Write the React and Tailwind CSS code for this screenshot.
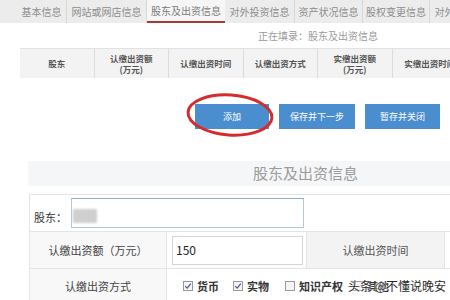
import React from "react";

const tabs = [
  { t: "基本信息", w: "w-[50px]" },
  { t: "网站或网店信息", w: "w-[80px]" },
  { t: "股东及出资信息", w: "w-[78px]", active: true },
  { t: "对外投资信息", w: "w-[70px]" },
  { t: "资产状况信息", w: "w-[68px]" },
  { t: "股权变更信息", w: "w-[67px]" },
  { t: "对外", w: "w-[30px]" },
];

const heads = [
  ["股东"],
  ["认缴出资额", "(万元)"],
  ["认缴出资时间"],
  ["认缴出资方式"],
  ["实缴出资额", "(万元)"],
  ["实缴出资时间"],
];

function Box({ checked }) {
  return (
    <span className="inline-flex items-center justify-center w-[10px] h-[10px] border border-[#9a9a9a] bg-[#f4f4f4] mr-[4px]">
      {checked && (
        <svg width="8" height="8" viewBox="0 0 8 8">
          <path d="M1.2 4.2 L3.2 6.2 L6.8 1.6" fill="none" stroke="#4a5a8a" strokeWidth="1.2" />
        </svg>
      )}
    </span>
  );
}

export default function App() {
  return (
    <div className="relative w-[450px] h-[300px] overflow-hidden bg-white font-['Noto_Sans_CJK_SC',sans-serif]">
      {/* tab bar */}
      <div className="flex h-[23px] bg-[#ececec] pl-[17px] text-[10px] text-[#8c8c8c]">
        {tabs.map((tb, i) => (
          <div
            key={i}
            className={`${tb.w} shrink-0 flex items-center justify-center whitespace-nowrap overflow-hidden ${
              tb.active ? "bg-[#f6f6f6] border-b-2 border-[#a33a3a] text-[#7a7a7a]" : "border-r border-[#d8d8d8]"
            }`}
          >
            {tb.t}
          </div>
        ))}
      </div>

      {/* status row */}
      <div className="h-[25px] flex items-center pl-[258px] text-[10px] text-[#9a9a9a]">
        正在填录：股东及出资信息
      </div>

      {/* table header */}
      <div className="ml-[20px] flex h-[30px] bg-[#f3f3f3] border-t border-[#e2e2e2] text-[8.5px] font-bold text-[#555]">
        {heads.map((h, i) => (
          <div
            key={i}
            className={`w-[74.5px] shrink-0 flex flex-col items-center justify-center leading-[11px] whitespace-nowrap overflow-hidden ${
              i < 5 ? "border-r border-[#dcdcdc]" : ""
            }`}
          >
            {h.map((l, j) => (
              <span key={j}>{l}</span>
            ))}
          </div>
        ))}
      </div>

      {/* buttons */}
      <div className="relative flex gap-[10px] pl-[195px] mt-[26px] text-[9px] text-white">
        <div className="w-[74px] h-[25px] bg-[#4a8ecf] flex items-center justify-center">添加</div>
        <div className="w-[76px] h-[25px] bg-[#4a8ecf] flex items-center justify-center">保存并下一步</div>
        <div className="w-[75px] h-[25px] bg-[#4a8ecf] flex items-center justify-center">暂存并关闭</div>
        <svg
          className="absolute left-[183px] top-[-14px]"
          width="94"
          height="50"
          viewBox="0 0 94 50"
        >
          <ellipse
            cx="47"
            cy="25"
            rx="42"
            ry="20"
            fill="none"
            stroke="#d62b2b"
            strokeWidth="3"
            transform="rotate(4 47 25)"
          />
        </svg>
      </div>

      {/* section band */}
      <div className="ml-[28px] mt-[32px] h-[25px] bg-[#f4f6f8] flex items-center pl-[225px] text-[15px] text-[#9b9b9b]">
        股东及出资信息
      </div>

      {/* form */}
      <div className="ml-[29px] mt-[8px] border-l border-t border-[#e4e4e4] text-[11px] text-[#333]">
        <div className="flex items-center h-[37px] border-b border-[#e4e4e4]">
          <span className="pl-[4px] w-[41px] mt-[8px]">股东：</span>
          <div className="relative w-[233px] h-[30px] border border-[#b4cad8] border-t-[#8fb1c6] bg-white">
            <div className="absolute left-[1px] top-[10px] w-[24px] h-[14px] bg-[#cfcfcf] blur-[1px]" />
          </div>
        </div>
        <div className="flex h-[37px] border-b border-[#e4e4e4]">
          <div className="w-[137px] bg-[#f8f8f8] border-r border-[#e4e4e4] flex items-center justify-center text-[#444]">
            认缴出资额（万元）
          </div>
          <div className="w-[139px] flex items-center pl-[5px]">
            <div className="w-[131px] h-[29px] border border-[#d6d6d6] flex items-center pl-[3px] text-[12px] text-[#222]">
              150
            </div>
          </div>
          <div className="w-[139px] bg-[#f3f3f3] border-l border-r border-[#e4e4e4] flex items-center justify-center text-[#555]">
            认缴出资时间
          </div>
        </div>
        <div className="flex h-[34px]">
          <div className="w-[137px] bg-[#f8f8f8] border-r border-[#e4e4e4] flex items-center justify-center text-[#444]">
            认缴出资方式
          </div>
          <div className="flex items-center pl-[16px] font-bold text-[#333] whitespace-nowrap">
            <Box checked />
            <span className="mr-[14px]">货币</span>
            <Box checked />
            <span className="mr-[16px]">实物</span>
            <Box />
            <span className="mr-[10px]">知识产权</span>
            <Box />
            <span>其他</span>
          </div>
        </div>
      </div>

      {/* watermark */}
      <div className="absolute left-[348px] top-[277px] text-[12px] text-[#2a2a2a] whitespace-nowrap [text-shadow:0_0_2px_#fff,0_0_2px_#fff]">
        头条 @不懂说晚安
      </div>
    </div>
  );
}
